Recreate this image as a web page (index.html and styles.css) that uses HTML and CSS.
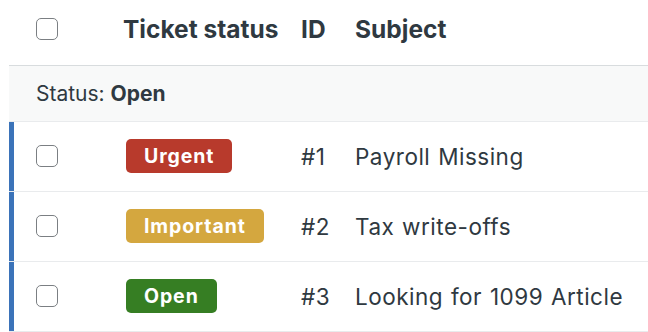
FILE: index.html
```html
<!DOCTYPE html>
<html>
  <head>
    <meta charset="UTF-8" />
    <meta name="viewport" content="width=device-width, initial-scale=1.0" />
    <title>Tickets</title>
    <link rel="stylesheet" href="styles.css">
  </head>
  <body>
    <table class="tickets">
      <thead>
        <tr>
          <th class="col-check"><span class="checkbox"></span></th>
          <th class="col-status">Ticket status</th>
          <th class="col-id">ID</th>
          <th class="col-subject">Subject</th>
        </tr>
      </thead>
      <tbody>
        <tr class="group-row">
          <td colspan="4">Status: <b>Open</b></td>
        </tr>
        <tr class="ticket-row">
          <td class="col-check"><span class="checkbox"></span></td>
          <td class="col-status"><span class="tag tag-urgent">Urgent</span></td>
          <td class="col-id">#1</td>
          <td class="col-subject">Payroll Missing</td>
        </tr>
        <tr class="ticket-row">
          <td class="col-check"><span class="checkbox"></span></td>
          <td class="col-status"><span class="tag tag-important">Important</span></td>
          <td class="col-id">#2</td>
          <td class="col-subject">Tax write-offs</td>
        </tr>
        <tr class="ticket-row">
          <td class="col-check"><span class="checkbox"></span></td>
          <td class="col-status"><span class="tag tag-open">Open</span></td>
          <td class="col-id">#3</td>
          <td class="col-subject">Looking for 1099 Article</td>
        </tr>
      </tbody>
    </table>
  </body>
</html>
```

FILE: styles.css
```css
* {
  margin: 0;
  box-sizing: border-box;
}

body {
  margin: 0;
  padding: 0 0 0 9px;
  overflow: hidden;
  font-family: Inter, "Liberation Sans", sans-serif;
  color: #2f3941;
}

.tickets {
  width: 900px;
  border-collapse: collapse;
  table-layout: fixed;
}

.tickets th,
.tickets td {
  padding: 0 12px;
  text-align: left;
  vertical-align: middle;
  white-space: nowrap;
}

.tickets th {
  height: 65px;
  padding-bottom: 6px;
  font-size: 24.5px;
  font-weight: 700;
  border-bottom: 1px solid #d8dcde;
}

.col-check {
  width: 102px;
}
.tickets .col-check {
  padding-left: 27px;
}
.col-status {
  width: 178px;
}
.col-id {
  width: 54px;
}

.group-row td {
  height: 56px;
  padding-left: 27px;
  font-size: 21px;
  background: #f8f9f9;
  border-bottom: 1px solid #e9ebed;
}
.group-row b {
  font-weight: 700;
}

.ticket-row td {
  height: 70px;
  font-size: 22.5px;
  letter-spacing: 0.5px;
  word-spacing: 1px;
  border-bottom: 1px solid #e9ebed;
}
.ticket-row td.col-check {
  box-shadow: inset 5px 0 0 #3b73b9;
}

.checkbox {
  display: block;
  width: 22px;
  height: 22px;
  border: 1.5px solid #7b7f83;
  border-radius: 5px;
  background: #fff;
}

.tag {
  display: inline-block;
  margin-left: 3px;
  padding: 0 18px;
  height: 34px;
  line-height: 34px;
  border-radius: 5px;
  font-size: 19.5px;
  font-weight: 700;
  letter-spacing: 0.9px;
  color: #fff;
}
.tag-urgent {
  background: #b83a2c;
}
.tag-important {
  background: #d4a73f;
}
.tag-open {
  background: #367e23;
}
```
